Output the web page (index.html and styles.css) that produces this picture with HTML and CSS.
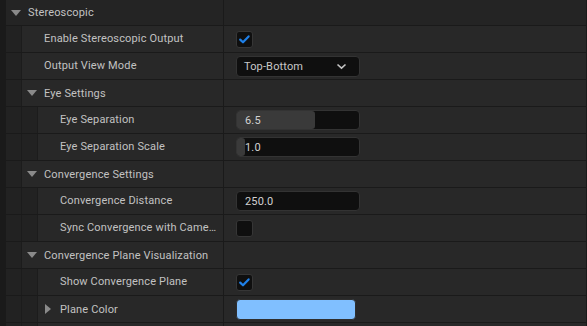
FILE: index.html
```html
<!DOCTYPE html>
<html lang="en">
<head>
    <meta charset="UTF-8">
    <title>Details - Stereoscopic</title>
    <link rel="stylesheet" href="styles.css">
</head>
<body>
<div class="panel">
    <div class="row cat first">
        <div class="left">
            <div class="name"><span class="arrow down"></span>Stereoscopic</div>
        </div>
        <div class="value"></div>
    </div>
    <div class="row">
        <div class="left">
            <span class="gutter"></span>
            <div class="name leaf">Enable Stereoscopic Output</div>
        </div>
        <div class="value">
            <span class="check"><svg width="17" height="17" viewBox="0 0 17 17"><path d="M4.2 8.6 L7 11.3 L12.6 5.4" fill="none" stroke="#1f80e8" stroke-width="2.2" stroke-linecap="round" stroke-linejoin="round"/></svg></span>
        </div>
    </div>
    <div class="row">
        <div class="left">
            <span class="gutter"></span>
            <div class="name leaf">Output View Mode</div>
        </div>
        <div class="value">
            <div class="combo">
                <span>Top-Bottom</span>
                <svg width="11" height="7" viewBox="0 0 11 7"><path d="M1.5 1.5 L5.5 5.2 L9.5 1.5" fill="none" stroke="#c4c4c4" stroke-width="1.6"/></svg>
            </div>
        </div>
    </div>
    <div class="row">
        <div class="left">
            <span class="gutter"></span>
            <div class="name"><span class="arrow down"></span>Eye Settings</div>
        </div>
        <div class="value"></div>
    </div>
    <div class="row">
        <div class="left">
            <span class="gutter"></span><span class="gutter"></span>
            <div class="name leaf">Eye Separation</div>
        </div>
        <div class="value">
            <div class="field">
                <span class="fill" style="width: 78px"></span>
                <span class="num">6.5</span>
            </div>
        </div>
    </div>
    <div class="row">
        <div class="left">
            <span class="gutter"></span><span class="gutter"></span>
            <div class="name leaf">Eye Separation Scale</div>
        </div>
        <div class="value">
            <div class="field">
                <span class="fill" style="width: 8px"></span>
                <span class="num">1.0</span>
            </div>
        </div>
    </div>
    <div class="row">
        <div class="left">
            <span class="gutter"></span>
            <div class="name"><span class="arrow down"></span>Convergence Settings</div>
        </div>
        <div class="value"></div>
    </div>
    <div class="row">
        <div class="left">
            <span class="gutter"></span><span class="gutter"></span>
            <div class="name leaf">Convergence Distance</div>
        </div>
        <div class="value">
            <div class="field">
                <span class="num">250.0</span>
            </div>
        </div>
    </div>
    <div class="row">
        <div class="left">
            <span class="gutter"></span><span class="gutter"></span>
            <div class="name leaf">Sync Convergence with Camera</div>
        </div>
        <div class="value">
            <span class="check"></span>
        </div>
    </div>
    <div class="row">
        <div class="left">
            <span class="gutter"></span>
            <div class="name"><span class="arrow down"></span>Convergence Plane Visualization</div>
        </div>
        <div class="value"></div>
    </div>
    <div class="row">
        <div class="left">
            <span class="gutter"></span><span class="gutter"></span>
            <div class="name leaf">Show Convergence Plane</div>
        </div>
        <div class="value">
            <span class="check"><svg width="17" height="17" viewBox="0 0 17 17"><path d="M4.2 8.6 L7 11.3 L12.6 5.4" fill="none" stroke="#1f80e8" stroke-width="2.2" stroke-linecap="round" stroke-linejoin="round"/></svg></span>
        </div>
    </div>
    <div class="row">
        <div class="left">
            <span class="gutter"></span><span class="gutter"></span>
            <div class="name"><span class="arrow right"></span>Plane Color</div>
        </div>
        <div class="value">
            <span class="swatch"></span>
        </div>
    </div>
    <div class="row">
        <div class="left">
            <span class="gutter"></span><span class="gutter"></span>
            <div class="name leaf"></div>
        </div>
        <div class="value"></div>
    </div>
</div>
</body>
</html>
```

FILE: styles.css
```css
body {
    margin: 0;
    background-color: #1a1a1a;
    font-family: Roboto, 'Liberation Sans', sans-serif;
    font-size: 11px;
    letter-spacing: 0.15px;
    color: #c2c2c2;
    overflow: hidden;
}

.panel {
    display: flex;
    flex-direction: column;
    gap: 1px;
    padding-left: 6px;
    width: 580px;
}

.row {
    display: flex;
    height: 26px;
    background-color: #282828;
    flex: none;
}

.row.first {
    height: 25px;
}

.row.cat {
    background-color: #242424;
}

.left {
    width: 217px;
    display: flex;
    flex: none;
}

.gutter {
    width: 15px;
    flex: none;
    background-color: #222222;
    border-right: 1px solid #1c1c1c;
}

.name {
    flex: 1;
    min-width: 0;
    display: flex;
    align-items: center;
    padding-left: 5px;
    padding-right: 6px;
    white-space: nowrap;
    overflow: hidden;
}

.name.leaf {
    padding-left: 22px;
    display: block;
    line-height: 26px;
    text-overflow: ellipsis;
}

.arrow {
    width: 17px;
    height: 10px;
    flex: none;
    position: relative;
}

.arrow.down::before {
    content: "";
    position: absolute;
    left: 0;
    top: 2px;
    border-left: 5px solid transparent;
    border-right: 5px solid transparent;
    border-top: 6px solid #8a8a8a;
}

.arrow.right::before {
    content: "";
    position: absolute;
    left: 2px;
    top: 0;
    border-top: 5px solid transparent;
    border-bottom: 5px solid transparent;
    border-left: 6px solid #8a8a8a;
}

.value {
    flex: 1;
    border-left: 1px solid #1a1a1a;
    padding-left: 12px;
    display: flex;
    align-items: center;
}

.check {
    width: 17px;
    height: 17px;
    box-sizing: border-box;
    background-color: #0f0f0f;
    border: 1px solid #363636;
    border-radius: 3px;
    display: flex;
    align-items: center;
    justify-content: center;
}

.check svg {
    flex: none;
}

.combo {
    width: 124px;
    height: 21px;
    box-sizing: border-box;
    background-color: #0f0f0f;
    border: 1px solid #333333;
    border-radius: 4px;
    display: flex;
    align-items: center;
    justify-content: space-between;
    padding: 0 12px 0 7px;
    color: #c8c8c8;
}

.field {
    width: 124px;
    height: 20px;
    box-sizing: border-box;
    background-color: #0f0f0f;
    border: 1px solid #333333;
    border-radius: 4px;
    position: relative;
    display: flex;
    align-items: center;
}

.fill {
    position: absolute;
    left: 0;
    top: 0;
    bottom: 0;
    background-color: #3a3a3a;
    border-radius: 3px;
}

.num {
    position: relative;
    padding-left: 8px;
    color: #d2d2d2;
}

.swatch {
    width: 120px;
    height: 21px;
    box-sizing: border-box;
    background-color: #80bfff;
    border: 1px solid #2e2e2e;
    border-radius: 4px;
}
```
